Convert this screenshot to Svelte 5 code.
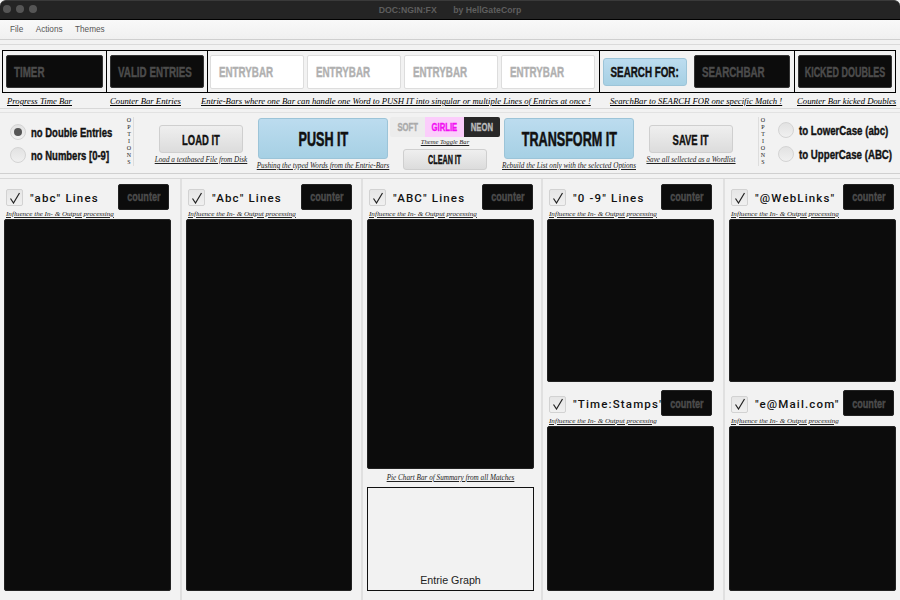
<script lang="ts">
  const menus = ['File', 'Actions', 'Themes'];

  const captions = [
    'Progress Time Bar',
    'Counter Bar Entries',
    'Entrie-Bars where one Bar can handle one Word to PUSH IT into singular or multiple Lines of Entries at once !',
    'SearchBar to SEARCH FOR one specific Match !',
    'Counter Bar kicked Doubles'
  ];

  const hint = 'Influence the In- & Output processing';
</script>

{#snippet lineBox(label: string)}
  <div class="head">
    <span class="check">
      <svg width="12" height="12" viewBox="0 0 12 12"><path d="M1.5 6.5 L4.5 11 L10.5 1" fill="none" stroke="#222" stroke-width="1.2" /></svg>
    </span>
    <span class="line-label">{label}</span>
    <span class="counter"><span class="nar mid">counter</span></span>
  </div>
  <div class="hint">{hint}</div>
  <div class="screen"></div>
{/snippet}

{#snippet optionsTag()}
  <div class="options-tag">
    {#each 'OPTIONS'.split('') as c}<span>{c}</span>{/each}
  </div>
{/snippet}

<div class="window">
  <header class="titlebar">
    <span class="dots"><i></i><i></i><i></i></span>
    <span class="title">DOC:NGIN:FX <b>by HellGateCorp</b></span>
  </header>

  <nav class="menubar">
    {#each menus as m}<span>{m}</span>{/each}
  </nav>

  <section class="topbar">
    <div class="cell"><div class="dark"><span class="nar">TIMER</span></div></div>
    <div class="cell"><div class="dark"><span class="nar">VALID ENTRIES</span></div></div>
    <div class="cell entries">
      {#each [1, 2, 3, 4] as n (n)}
        <div class="entry"><span class="nar">ENTRYBAR</span></div>
      {/each}
    </div>
    <div class="cell search">
      <button class="blue search-btn"><span class="nar mid">SEARCH FOR:</span></button>
      <div class="dark"><span class="nar">SEARCHBAR</span></div>
    </div>
    <div class="cell"><div class="dark center"><span class="nar mid kicked">KICKED DOUBLES</span></div></div>
  </section>

  <div class="captions">
    {#each captions as c}
      <span>{c}</span>
    {/each}
  </div>

  <section class="controls">
    <div class="radios left">
      <label><span class="radio on"></span><span class="nar">no Double Entries</span></label>
      <label><span class="radio"></span><span class="nar">no Numbers [0-9]</span></label>
    </div>
    {@render optionsTag()}

    <div class="action load">
      <button class="grey big"><span class="nar mid">LOAD IT</span></button>
      <small>Load a textbased File from Disk</small>
    </div>
    <div class="action push">
      <button class="blue huge"><span class="nar mid">PUSH IT</span></button>
      <small>Pushing the typed Words from the Entrie-Bars</small>
    </div>
    <div class="theme">
      <div class="toggle">
        <span class="soft"><span class="nar mid">SOFT</span></span>
        <span class="girlie"><span class="nar mid">GIRLIE</span></span>
        <span class="neon"><span class="nar mid">NEON</span></span>
      </div>
      <small>Theme Toggle Bar</small>
      <button class="grey clean"><span class="nar mid">CLEAN IT</span></button>
    </div>
    <div class="action transform">
      <button class="blue huge"><span class="nar mid">TRANSFORM IT</span></button>
      <small>Rebuild the List only with the selected Options</small>
    </div>
    <div class="action save">
      <button class="grey big"><span class="nar mid">SAVE IT</span></button>
      <small>Save all sellected as a Wordlist</small>
    </div>

    <div class="right-end">
      {@render optionsTag()}
      <div class="radios">
        <label><span class="radio"></span><span class="nar">to LowerCase (abc)</span></label>
        <label><span class="radio"></span><span class="nar">to UpperCase (ABC)</span></label>
      </div>
    </div>
  </section>

  <section class="columns">
    <div class="col">
      {@render lineBox('"abc" Lines')}
    </div>
    <div class="col">
      {@render lineBox('"Abc" Lines')}
    </div>
    <div class="col">
      {@render lineBox('"ABC" Lines')}
      <div class="pie-caption">Pie Chart Bar of Summary from all Matches</div>
      <div class="graph"><span>Entrie Graph</span></div>
    </div>
    <div class="col split">
      <div class="half">{@render lineBox('"0 -9" Lines')}</div>
      <div class="half">{@render lineBox('"Time:Stamps"')}</div>
    </div>
    <div class="col split">
      <div class="half">{@render lineBox('"@WebLinks"')}</div>
      <div class="half">{@render lineBox('"e@Mail.com"')}</div>
    </div>
  </section>
</div>

<style>
  :global(body) {
    margin: 0;
    background: #f2f2f2;
  }

  .window {
    width: 900px;
    height: 600px;
    overflow: hidden;
    display: flex;
    flex-direction: column;
    background: #f2f2f2;
    font-family: "Liberation Sans", sans-serif;
  }

  .titlebar {
    height: 18px;
    flex: none;
    position: relative;
    display: flex;
    align-items: center;
    justify-content: center;
    background: #242424;
    border-bottom: 1px solid #000;
    border-top: 1px solid #3a3a3a;
    border-radius: 6px 6px 0 0;
    color: #5e5e5e;
    font-size: 8.7px;
    font-weight: bold;
  }

  .title b {
    margin-left: 14px;
  }

  .dots {
    position: absolute;
    left: 3px;
    top: 4px;
    display: flex;
    gap: 5px;
  }

  .dots i {
    width: 8px;
    height: 8px;
    border-radius: 50%;
    background: #555;
  }

  .menubar {
    height: 19px;
    flex: none;
    display: flex;
    align-items: center;
    gap: 12.5px;
    padding-left: 10px;
    color: #555;
    font-size: 8.2px;
    background: linear-gradient(#f9f9f9, #f0f0f0);
    border-bottom: 1px solid #cfcfcf;
    box-shadow: 0 4px 0 #f2f2f2, 0 5px 0 #dadada;
  }

  /* condensed heavy lettering, none of the installed fonts has a narrow cut */
  .nar {
    display: inline-block;
    flex: none;
    white-space: nowrap;
    transform: scaleX(0.7);
    transform-origin: left center;
    font-weight: bold;
    -webkit-text-stroke: 0.4px currentColor;
  }

  .nar.mid {
    transform-origin: center;
  }

  .nar.kicked {
    transform: scaleX(0.64);
  }

  .topbar {
    margin: 10px 4px 0 2px;
    height: 43px;
    box-sizing: border-box;
    flex: none;
    display: grid;
    grid-template-columns: 104px 101px 392px 195px 1fr;
    border: 1px solid #000;
  }

  .cell {
    display: flex;
    align-items: center;
    gap: 4px;
    padding: 3px;
    box-sizing: border-box;
    border-right: 1px solid #000;
    min-width: 0;
  }

  .cell:last-child {
    border-right: 0;
  }

  .dark {
    flex: 1;
    min-width: 0;
    height: 33px;
    box-sizing: border-box;
    padding-left: 7px;
    display: flex;
    align-items: center;
    background: #0c0c0c;
    border: 1px solid #333;
    border-radius: 2px;
    color: #4c4c4c;
    font-size: 14px;
    overflow: hidden;
  }

  .center {
    padding-left: 0;
    justify-content: center;
  }

  .entries {
    gap: 3px;
    padding: 3px 2px;
  }

  .entry {
    flex: none;
    width: 94px;
    height: 34px;
    box-sizing: border-box;
    padding-left: 8px;
    display: flex;
    align-items: center;
    background: #fff;
    border: 1px solid #ddd;
    border-radius: 2px;
    color: #b0b0b0;
    font-size: 14px;
  }

  .search {
    gap: 7px;
    padding-right: 4px;
  }

  button {
    display: flex;
    align-items: center;
    justify-content: center;
    padding: 0;
    color: #111;
    font-family: inherit;
  }

  .blue {
    border: 1px solid #9cc4d8;
    border-radius: 3px;
    background: linear-gradient(#bcdcef, #a6d0e4);
  }

  .grey {
    border: 1px solid #cfcfcf;
    border-radius: 3px;
    background: linear-gradient(#efefef, #dcdcdc);
  }

  .search-btn {
    flex: none;
    width: 84px;
    height: 28px;
    font-size: 14px;
  }

  .captions {
    flex: none;
    height: 15px;
    margin-top: 1px;
    box-sizing: border-box;
    padding-left: 7px;
    display: grid;
    grid-template-columns: 103px 91px 409px 187px auto;
    align-items: center;
    border-bottom: 1px solid #d8d8d8;
  }

  .captions span {
    white-space: nowrap;
    font-family: "Liberation Serif", serif;
    font-style: italic;
    font-size: 8.7px;
    text-decoration: underline;
    color: #000;
  }

  .controls {
    flex: none;
    height: 62px;
    margin-top: 3px;
    display: flex;
    align-items: flex-start;
    box-sizing: border-box;
    padding-top: 4px;
    border-top: 1px solid #e2e2e2;
    border-bottom: 1px solid #d0d0d0;
  }

  .radios {
    display: flex;
    flex-direction: column;
    gap: 8px;
    padding-top: 5px;
    flex: none;
  }

  .radios.left {
    width: 114px;
    padding-left: 10px;
    padding-top: 7px;
    gap: 7px;
    box-sizing: border-box;
  }

  .radios label {
    display: flex;
    align-items: center;
    gap: 5px;
    font-size: 13px;
    color: #111;
    height: 16px;
  }

  .radios .nar {
    transform: scaleX(0.73);
  }

  .right-end .radios .nar {
    transform: scaleX(0.745);
  }

  .radio {
    width: 16px;
    height: 16px;
    box-sizing: border-box;
    flex: none;
    border-radius: 50%;
    border: 1px solid #d4d4d4;
    background: linear-gradient(#e2e2e2, #f0f0f0);
    display: flex;
    align-items: center;
    justify-content: center;
  }

  .radio.on::after {
    content: '';
    width: 8px;
    height: 8px;
    border-radius: 50%;
    background: #555;
  }

  .options-tag {
    flex: none;
    width: 9px;
    height: 49px;
    box-sizing: border-box;
    display: flex;
    flex-direction: column;
    align-items: center;
    font-family: "Liberation Serif", serif;
    font-size: 6px;
    line-height: 7px;
    color: #222;
    border-right: 1px solid #ddd;
    margin-left: 11px;
  }

  .action {
    flex: none;
    display: flex;
    flex-direction: column;
    align-items: center;
    gap: 2px;
  }

  small {
    font-family: "Liberation Serif", serif;
    font-style: italic;
    font-size: 7.2px;
    line-height: 10px;
    text-decoration: underline;
    color: #222;
    white-space: nowrap;
  }

  .load {
    width: 84px;
    margin: 8px 0 0 25px;
  }

  .big {
    width: 84px;
    height: 28px;
    font-size: 15px;
  }

  .big .nar {
    transform: scaleX(0.63);
  }

  .push {
    width: 130px;
    margin: 1px 0 0 15px;
  }

  .huge {
    width: 130px;
    height: 41px;
    font-size: 21px;
  }

  .huge .nar {
    transform: scaleX(0.6);
    -webkit-text-stroke-width: 0.6px;
  }

  .theme {
    flex: none;
    width: 110px;
    margin-left: 2px;
    display: flex;
    flex-direction: column;
    align-items: center;
  }

  .toggle {
    display: flex;
    height: 20px;
    font-size: 11px;
  }

  .toggle > span {
    width: 35px;
    display: flex;
    align-items: center;
    justify-content: center;
  }

  .soft {
    background: #ececec;
    color: #aaa;
    border-radius: 2px 0 0 2px;
  }

  .toggle > .girlie {
    width: 39px;
    background: #fbcdfb;
    color: #f20ff2;
  }

  .toggle > .neon {
    width: 36px;
    background: #282828;
    color: #bbb;
    border-radius: 0 2px 2px 0;
  }

  .theme small {
    font-size: 6.6px;
  }

  .clean {
    width: 84px;
    height: 21px;
    font-size: 12px;
    margin-top: 2px;
  }

  .clean .nar {
    transform: scaleX(0.6);
  }

  .transform {
    width: 130px;
    margin: 1px 0 0 4px;
  }

  .save {
    width: 84px;
    margin: 8px 0 0 15px;
  }

  .right-end {
    margin-left: 25px;
    display: flex;
    gap: 11px;
  }

  .right-end .options-tag {
    margin-left: 0;
    border-right: 0;
    border-left: 1px solid #ddd;
  }

  .columns {
    flex: 1;
    min-height: 0;
    margin-top: 4px;
    display: grid;
    grid-template-columns: 182px 181px 180px 182px 1fr;
    border-top: 1px solid #d8d8d8;
  }

  .col {
    display: flex;
    flex-direction: column;
    padding: 4px 9px 9px 4px;
    border-right: 2px solid #e0e0e0;
    min-width: 0;
  }

  .col:nth-child(2) .counter {
    margin-right: 0;
  }

  .col:nth-child(3) {
    padding-right: 7px;
  }

  .col:nth-child(3) .counter {
    margin-right: 1px;
  }

  .col:last-child {
    border-right: 0;
    padding-right: 4px;
  }

  .split {
    gap: 8px;
  }

  .half {
    flex: 199 1 0;
    display: flex;
    flex-direction: column;
    min-height: 0;
  }

  .half:last-child {
    flex-grow: 202;
  }

  .head {
    flex: none;
    height: 27px;
    display: flex;
    align-items: center;
  }

  .check {
    flex: none;
    width: 17px;
    height: 17px;
    margin: 2px 7px 0 2px;
    box-sizing: border-box;
    display: flex;
    align-items: center;
    justify-content: center;
    border: 1px solid #d2d2d2;
    border-radius: 2px;
    background: linear-gradient(#e6e6e6, #f0f0f0);
  }

  .line-label {
    flex: 1;
    min-width: 0;
    font-family: Roboto, sans-serif;
    font-weight: 500;
    font-size: 11.5px;
    letter-spacing: 1.15px;
    color: #111;
    white-space: nowrap;
    padding-top: 2px;
  }

  .counter {
    flex: none;
    width: 51px;
    height: 26px;
    margin-right: 2px;
    display: flex;
    align-items: center;
    justify-content: center;
    background: #0c0c0c;
    border: 1px solid #222;
    box-sizing: border-box;
    border-radius: 2px;
    color: #4c4c4c;
    font-size: 13px;
  }

  .hint {
    flex: none;
    height: 9px;
    line-height: 8px;
    padding-left: 2px;
    font-family: "Liberation Serif", serif;
    font-style: italic;
    font-size: 7.1px;
    text-decoration: underline;
    color: #222;
    white-space: nowrap;
  }

  .screen {
    flex: 1;
    min-height: 0;
    background: #0c0c0c;
    border: 1px solid #222;
    box-sizing: border-box;
    border-radius: 2px;
  }

  .pie-caption {
    flex: none;
    height: 18px;
    display: flex;
    align-items: center;
    justify-content: center;
    font-family: "Liberation Serif", serif;
    font-style: italic;
    font-size: 7.2px;
    text-decoration: underline;
    color: #222;
    white-space: nowrap;
  }

  .graph {
    flex: none;
    height: 104px;
    box-sizing: border-box;
    border: 1px solid #111;
    display: flex;
    align-items: flex-end;
    justify-content: center;
    padding-bottom: 4px;
    font-size: 10.7px;
    color: #222;
  }
</style>
